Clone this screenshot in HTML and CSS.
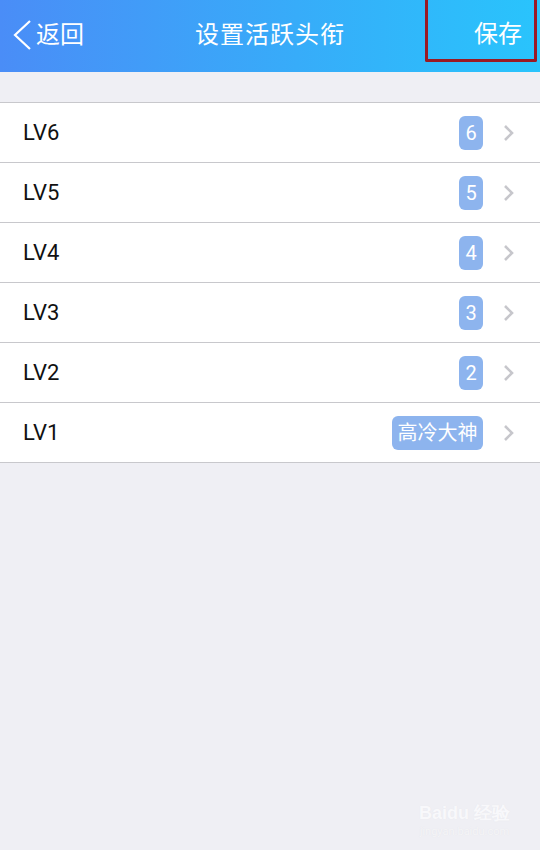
FILE: index.html
```html
<!DOCTYPE html>
<html>
<head>
<meta charset="utf-8">
<link rel="stylesheet" href="styles.css">
</head>
<body>
<header class="nav">
  <div class="back">
    <svg class="back-icon" width="22" height="32" viewBox="0 0 22 32"><polyline points="19,2 4,16 19,30" fill="none" stroke="#fff" stroke-width="2.2"/></svg>
    <span>返回</span>
  </div>
  <div class="title">设置活跃头衔</div>
  <div class="save">保存</div>
</header>
<main class="list">
  <div class="row"><span class="lv">LV6</span><span class="badge">6</span><svg class="chev" width="12" height="18" viewBox="0 0 12 18"><polyline points="2,2 9,9 2,16" fill="none" stroke="#c7c7cc" stroke-width="2.6"/></svg></div>
  <div class="row"><span class="lv">LV5</span><span class="badge">5</span><svg class="chev" width="12" height="18" viewBox="0 0 12 18"><polyline points="2,2 9,9 2,16" fill="none" stroke="#c7c7cc" stroke-width="2.6"/></svg></div>
  <div class="row"><span class="lv">LV4</span><span class="badge">4</span><svg class="chev" width="12" height="18" viewBox="0 0 12 18"><polyline points="2,2 9,9 2,16" fill="none" stroke="#c7c7cc" stroke-width="2.6"/></svg></div>
  <div class="row"><span class="lv">LV3</span><span class="badge">3</span><svg class="chev" width="12" height="18" viewBox="0 0 12 18"><polyline points="2,2 9,9 2,16" fill="none" stroke="#c7c7cc" stroke-width="2.6"/></svg></div>
  <div class="row"><span class="lv">LV2</span><span class="badge">2</span><svg class="chev" width="12" height="18" viewBox="0 0 12 18"><polyline points="2,2 9,9 2,16" fill="none" stroke="#c7c7cc" stroke-width="2.6"/></svg></div>
  <div class="row"><span class="lv">LV1</span><span class="badge wide">高冷大神</span><svg class="chev" width="12" height="18" viewBox="0 0 12 18"><polyline points="2,2 9,9 2,16" fill="none" stroke="#c7c7cc" stroke-width="2.6"/></svg></div>
</main>
<div class="watermark">
  <div class="wm-logo">Bai<span class="paw">du</span> 经验</div>
  <div class="wm-url">jingyan.baidu.com</div>
</div>
</body>
</html>
```
FILE: styles.css
```css
html, body {
  margin: 0;
  padding: 0;
}
body {
  width: 540px;
  height: 850px;
  background: #efeff4;
  font-family: Roboto, "Noto Sans CJK SC", sans-serif;
  position: relative;
  overflow: hidden;
}
.nav {
  height: 72px;
  background: linear-gradient(90deg, #4a8df7 0%, #37acf9 55%, #29c4fc 100%);
  display: flex;
  align-items: center;
  position: relative;
  color: #fff;
}
.back {
  display: flex;
  align-items: center;
  padding-left: 11px;
  margin-top: -2px;
  font-size: 24px;
}
.back-icon {
  margin-right: 3px;
}
.back span {
  line-height: 1;
}
.title {
  position: absolute;
  left: 0;
  right: 0;
  top: 0;
  height: 72px;
  line-height: 70px;
  text-align: center;
  font-size: 24px;
  letter-spacing: 1px;
  pointer-events: none;
}
.save {
  position: absolute;
  right: 3px;
  top: 0;
  height: 59px;
  width: 94px;
  border: 3px solid #9a1a24;
  border-top: none;
  font-size: 24px;
  line-height: 68px;
  text-align: right;
  padding-right: 12px;
  box-sizing: content-box;
  border-radius: 0 0 2px 2px;
}
.list {
  margin-top: 30px;
  background: #fff;
  border-top: 1px solid #c8c8cc;
}
.row {
  height: 59px;
  border-bottom: 1px solid #c8c8cc;
  display: flex;
  align-items: center;
  padding-left: 23px;
  padding-right: 25px;
}
.lv {
  flex: 1;
  font-size: 22px;
  color: #111;
}
.badge {
  height: 34px;
  min-width: 24px;
  box-sizing: border-box;
  border-radius: 6px;
  background: #8db4ee;
  color: #fff;
  font-size: 20px;
  line-height: 34px;
  text-align: center;
  padding: 0 1px;
}
.badge.wide {
  padding: 0 5px;
  width: 91px;
}
.chev {
  margin-left: 20px;
}
.watermark {
  position: absolute;
  right: 30px;
  bottom: 12px;
  color: #fff;
  text-align: center;
  opacity: 0.9;
}
.wm-logo {
  font-family: "Liberation Sans", sans-serif;
  font-size: 18px;
  font-weight: bold;
  color: #fafafc;
  text-shadow: 0 0 1px #e4e4ea;
}
.wm-url {
  font-size: 11px;
  color: #f6f6f8;
  text-shadow: 0 0 1px #e2e2e8;
}
```
